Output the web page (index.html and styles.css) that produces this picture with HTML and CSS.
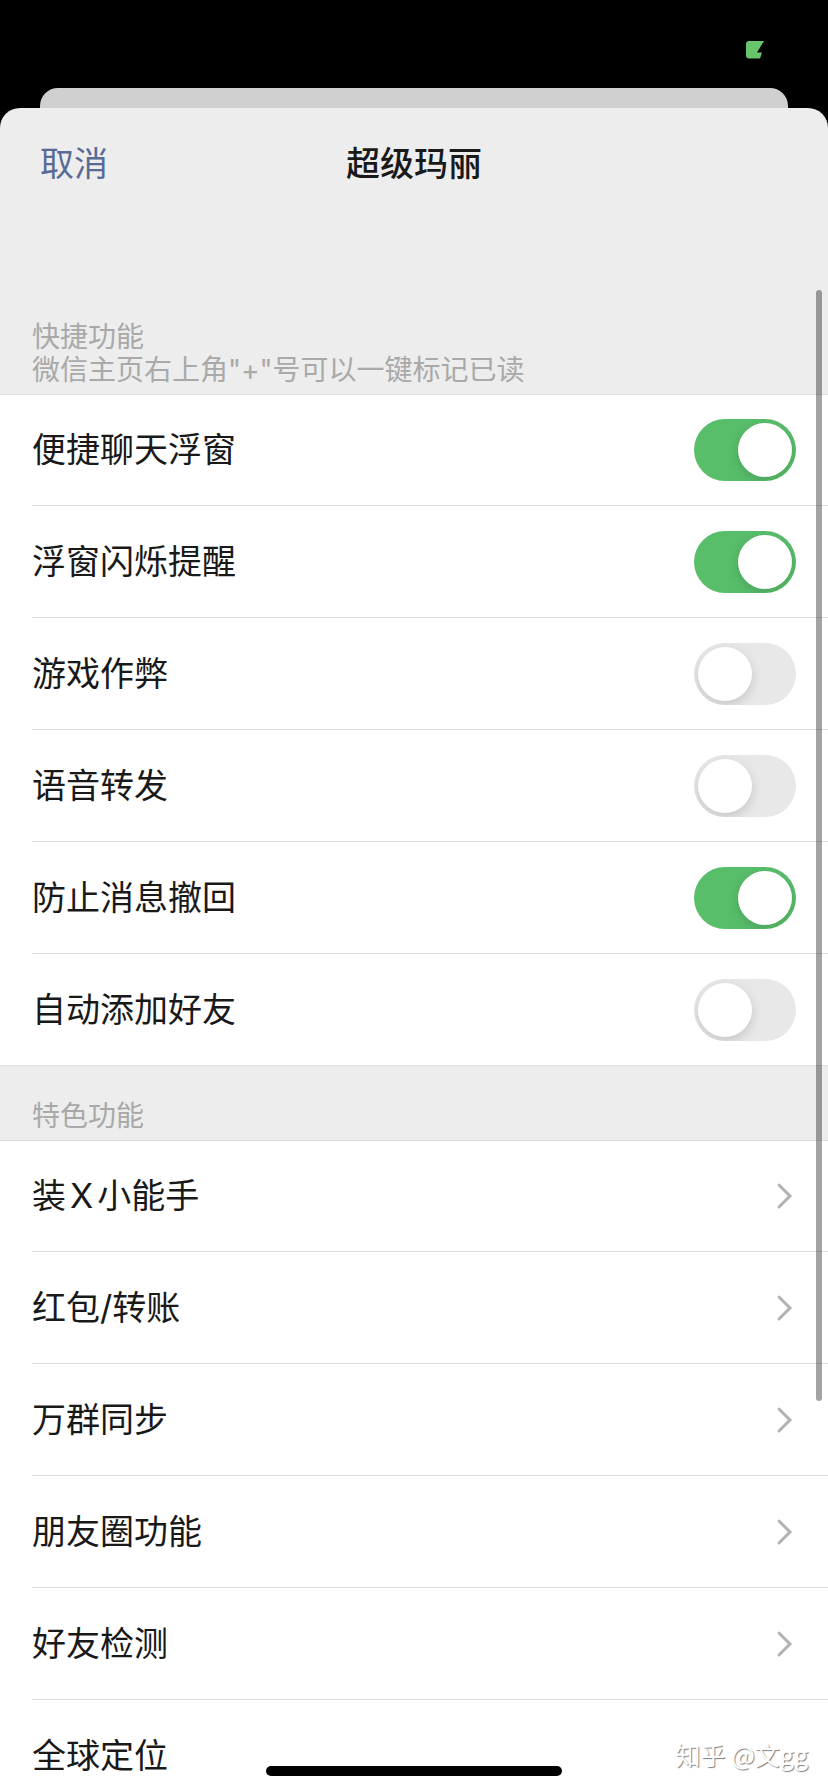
FILE: index.html
```
<!DOCTYPE html>
<html lang="zh-CN">
<head>
  <meta charset="UTF-8">
  <meta name="viewport" content="width=device-width, initial-scale=1.0">
  <title>超级玛丽</title>
  <link rel="stylesheet" href="styles.css">
</head>
<body>
  <div class="status-bar">
    <svg class="battery" width="18" height="18" viewBox="0 0 18 18" aria-hidden="true">
      <path d="M3 0H18L11 11.500H16L14 17.500H3Q0 17.500 0 14.500V3Q0 0 3 0Z" fill="#67c56b"/>
    </svg>
  </div>
  <div class="sheet-back"></div>

  <main class="sheet">
    <header class="navbar">
      <button class="cancel-btn" type="button">取消</button>
      <h1>超级玛丽</h1>
    </header>

    <!-- Quick functions -->
    <section>
      <div class="section-head first">
        <h2>快捷功能</h2>
        <p>微信主页右上角"+"号可以一键标记已读</p>
      </div>
      <ul class="list">
        <li><label class="cell"><span>便捷聊天浮窗</span><input class="switch" type="checkbox" checked></label></li>
        <li><label class="cell"><span>浮窗闪烁提醒</span><input class="switch" type="checkbox" checked></label></li>
        <li><label class="cell"><span>游戏作弊</span><input class="switch" type="checkbox"></label></li>
        <li><label class="cell"><span>语音转发</span><input class="switch" type="checkbox"></label></li>
        <li><label class="cell"><span>防止消息撤回</span><input class="switch" type="checkbox" checked></label></li>
        <li><label class="cell"><span>自动添加好友</span><input class="switch" type="checkbox"></label></li>
      </ul>
    </section>

    <!-- Special functions -->
    <section>
      <div class="section-head">
        <h2>特色功能</h2>
      </div>
      <ul class="list">
        <li><a class="cell" href="#"><span>装<span class="latin">X</span>小能手</span><svg class="chevron" viewBox="0 0 16 28"><path d="M2 3L13 14L2 25"/></svg></a></li>
        <li><a class="cell" href="#"><span>红包/转账</span><svg class="chevron" viewBox="0 0 16 28"><path d="M2 3L13 14L2 25"/></svg></a></li>
        <li><a class="cell" href="#"><span>万群同步</span><svg class="chevron" viewBox="0 0 16 28"><path d="M2 3L13 14L2 25"/></svg></a></li>
        <li><a class="cell" href="#"><span>朋友圈功能</span><svg class="chevron" viewBox="0 0 16 28"><path d="M2 3L13 14L2 25"/></svg></a></li>
        <li><a class="cell" href="#"><span>好友检测</span><svg class="chevron" viewBox="0 0 16 28"><path d="M2 3L13 14L2 25"/></svg></a></li>
        <li><a class="cell" href="#"><span>全球定位</span></a></li>
      </ul>
    </section>
  </main>

  <div class="scrollbar"></div>
  <div class="home-indicator"></div>
  <div class="watermark">知乎 @文gg</div>
</body>
</html>
```
FILE: styles.css
```
* {
  margin: 0;
  padding: 0;
  box-sizing: border-box;
}

body {
  font-family: Inter, "Noto Sans CJK SC", sans-serif;
  background-color: #000;
  color: #191919;
  display: flex;
  flex-direction: column;
  height: 100vh;
  overflow: hidden;
  position: relative;
}

.status-bar {
  flex: none;
  height: 88px;
  display: flex;
  justify-content: flex-end;
  align-items: center;
  padding: 12px 64px 0 0;
}

.battery {
  display: block;
}

.sheet-back {
  flex: none;
  height: 20px;
  margin: 0 40px;
  background-color: #d0d0d0;
  border-radius: 18px 18px 0 0;
}

.sheet {
  flex: 1;
  min-height: 0;
  overflow: hidden;
  background-color: #ededed;
  border-radius: 20px 20px 0 0;
}

.navbar {
  display: grid;
  grid-template-columns: 1fr auto 1fr;
  align-items: center;
  height: 112px;
  padding: 0 40px;
}

.navbar h1 {
  font-size: 34px;
  font-weight: 500;
  line-height: 48px;
}

.cancel-btn {
  justify-self: start;
  border: none;
  background: none;
  font-family: inherit;
  font-size: 34px;
  line-height: 48px;
  color: #576b95;
  cursor: pointer;
}

.section-head {
  padding: 34px 32px 7px;
  font-size: 28px;
  line-height: 33px;
  color: #a9a9a9;
}

.section-head.first {
  padding-top: 101px;
}

.section-head h2 {
  font-size: 28px;
  font-weight: 400;
}

.list {
  list-style: none;
  background-color: #fff;
  border-top: 1px solid #dedede;
}

.cell {
  display: flex;
  justify-content: space-between;
  align-items: center;
  height: 112px;
  margin-left: 32px;
  padding-right: 32px;
  border-bottom: 1px solid #dedede;
  font-size: 34px;
  line-height: 48px;
  color: inherit;
  text-decoration: none;
  cursor: pointer;
}

/* the list's top border takes one pixel of the first row */
li:first-child .cell {
  height: 111px;
}

li:last-child .cell {
  margin-left: 0;
  padding-left: 32px;
}

.latin {
  margin: 0 4px;
}

.switch {
  appearance: none;
  display: flex;
  width: 102px;
  height: 62px;
  padding: 4px;
  border-radius: 31px;
  background-color: #e8e8e8;
  overflow: hidden;
  cursor: pointer;
}

.switch::before {
  content: "";
  width: 54px;
  height: 54px;
  border-radius: 50%;
  background-color: #fff;
  box-shadow: 0 4px 12px rgba(0, 0, 0, 0.15);
}

.switch:checked {
  justify-content: flex-end;
  background-color: #58be6a;
}

.chevron {
  width: 16px;
  height: 28px;
  margin-right: 3px;
  fill: none;
  stroke: #b2b2b2;
  stroke-width: 3;
  stroke-linecap: round;
}

/* Overlays */
.scrollbar {
  position: absolute;
  top: 290px;
  right: 6px;
  width: 6px;
  height: 62vh;
  border-radius: 3px;
  background-color: rgba(0, 0, 0, 0.36);
}

.home-indicator {
  position: absolute;
  bottom: 16px;
  left: 50%;
  width: 296px;
  height: 10px;
  margin-left: -148px;
  border-radius: 5px;
  background-color: #000;
}

.watermark {
  position: absolute;
  right: 20px;
  bottom: 20px;
  font-family: "Noto Sans CJK SC", sans-serif;
  font-size: 25px;
  line-height: 36px;
  color: #fff;
  text-shadow: 1px 1px 1px rgba(0, 0, 0, 0.5);
}
```
